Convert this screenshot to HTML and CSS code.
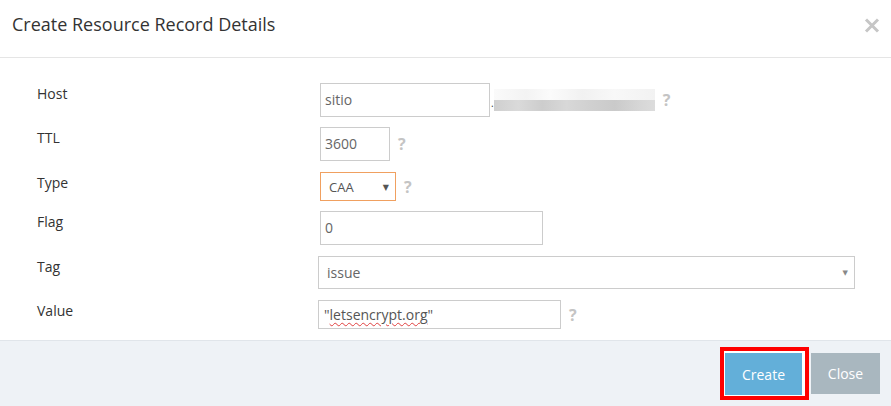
FILE: index.html
```html
<!DOCTYPE html>
<html>
<head>
<meta charset="utf-8">
<link rel="stylesheet" href="styles.css">
</head>
<body>
<div class="modal">
  <div class="modal-header">
    <h4 class="modal-title">Create Resource Record Details</h4>
    <span class="modal-close" aria-label="close">
      <svg width="16" height="15" viewBox="0 0 16 15"><path d="M2 1.5 L14 13.5 M14 1.5 L2 13.5" stroke="#c6c6c6" stroke-width="3" fill="none"/></svg>
    </span>
  </div>
  <div class="modal-body">
    <div class="row">
      <label class="lbl">Host</label>
      <div class="field">
        <div class="input w-host">sitio</div>
        <span class="dot">.</span>
        <span class="blur"><span class="blur-top"></span><span class="blur-bottom"></span></span>
        <span class="help help-host">?</span>
      </div>
    </div>
    <div class="row">
      <label class="lbl">TTL</label>
      <div class="field">
        <div class="input w-ttl">3600</div>
        <span class="help">?</span>
      </div>
    </div>
    <div class="row row-type">
      <label class="lbl">Type</label>
      <div class="field">
        <div class="select select-type"><span>CAA</span><span class="arrow">&#9660;</span></div>
        <span class="help">?</span>
      </div>
    </div>
    <div class="row">
      <label class="lbl">Flag</label>
      <div class="field">
        <div class="input w-flag">0</div>
      </div>
    </div>
    <div class="row row-tag">
      <label class="lbl">Tag</label>
      <div class="field">
        <div class="select select-tag"><span>issue</span><span class="arrow arrow-sm">&#9660;</span></div>
      </div>
    </div>
    <div class="row row-value">
      <label class="lbl">Value</label>
      <div class="field">
        <div class="input w-value">"<span class="misspelt">letsencrypt.org</span>"</div>
        <span class="help">?</span>
      </div>
    </div>
  </div>
  <div class="modal-footer">
    <span class="highlight"><button class="btn btn-create">Create</button></span>
    <button class="btn btn-close">Close</button>
  </div>
</div>
</body>
</html>
```
FILE: styles.css
```css
* { box-sizing: border-box; }
html, body { margin: 0; padding: 0; background: #fff; }
body {
  font-family: "Open Sans", "DejaVu Sans", sans-serif;
  font-size: 14px;
  color: #333;
  width: 891px;
  height: 406px;
  overflow: hidden;
}
.modal { width: 891px; height: 406px; display: flex; flex-direction: column; }
.modal-header {
  height: 58px;
  border-bottom: 1px solid #e5e5e5;
  display: flex;
  align-items: flex-start;
  justify-content: space-between;
  padding: 12px 11px 0 12px;
}
.modal-title {
  margin: 0;
  font-size: 18px;
  font-weight: 400;
  line-height: 24px;
  color: #333;
}
.modal-close { display: block; margin-top: 6px; width: 16px; height: 15px; }
.modal-close svg { display: block; }

.modal-body {
  flex: 1;
  padding: 25px 0 0 37px;
  display: flex;
  flex-direction: column;
  gap: 10px;
}
.row { display: grid; grid-template-columns: 283px 1fr; align-items: start; }
.row-type, .row-value, .row-tag { margin-top: 1px; }
.lbl { padding-top: 1px; line-height: 20px; color: #333; }
.field { display: flex; align-items: center; }

.input {
  height: 34px;
  border: 1px solid #ccc;
  padding: 0 4px;
  line-height: 32px;
  color: #666;
  font-size: 14px;
  white-space: nowrap;
}
.w-host { width: 170px; }
.w-ttl { width: 70px; }
.w-flag { width: 223px; }
.w-value { width: 243px; height: 29px; line-height: 27px; padding: 0 5px; margin-left: -2px; color: #555; }
.misspelt { text-decoration: underline wavy #e04040; text-decoration-thickness: 1px; text-underline-offset: 2px; }

.dot { color: #333; font-size: 10px; margin-left: 1px; align-self: flex-end; line-height: 12px; margin-bottom: 8px; }
.blur { display: flex; flex-direction: column; width: 161px; height: 22px; margin-left: 0; }
.blur-top { height: 11px; background: linear-gradient(90deg, #fafafa 0%, #f3f3f3 20%, #fbfbfb 35%, #f1f1f1 55%, #f8f8f8 75%, #f2f2f2 100%); }
.blur-bottom { height: 11px; background: linear-gradient(90deg, #cfcfcf 0%, #dadada 15%, #cdcdcd 30%, #d8d8d8 45%, #d0d0d0 60%, #cacaca 75%, #d6d6d6 90%, #dcdcdc 100%); }

.help {
  color: #c4c4c4;
  font-weight: 700;
  font-size: 16px;
  margin-left: 8px;
  line-height: 20px;
}
.help-host { margin-left: 8px; }

.select {
  display: flex;
  align-items: center;
  justify-content: space-between;
  border: 1px solid #ccc;
  color: #666;
  background: #fff;
}
.select-type {
  width: 76px;
  height: 29px;
  border-color: #f0a060;
  padding: 0 6px 0 8px;
  font-size: 13px;
  color: #555;
}
.select-tag {
  width: 537px;
  height: 33px;
  padding: 0 6px 0 8px;
  margin-left: -2px;
  font-size: 14px;
}
.arrow { font-size: 8px; color: #555; }
.arrow-sm { font-size: 7px; color: #888; }

.modal-footer {
  height: 66px;
  background: #eef2f6;
  border-top: 1px solid #e0e5ea;
  display: flex;
  justify-content: flex-end;
  align-items: flex-start;
  padding: 6px 11px 0 0;
}
.highlight {
  display: block;
  border: 4px solid #f00;
  padding: 2px 3px 1px 1px;
  background: #fff;
  margin-right: 2px;
}
.btn {
  display: block;
  border: none;
  font-family: "Open Sans", "DejaVu Sans", sans-serif;
  font-size: 14px;
  color: #fff;
  cursor: pointer;
}
.btn-create { width: 77px; height: 42px; background: #63afd9; }
.btn-close { width: 69px; height: 41px; background: #a9b7bf; margin-top: 6px; }
```
